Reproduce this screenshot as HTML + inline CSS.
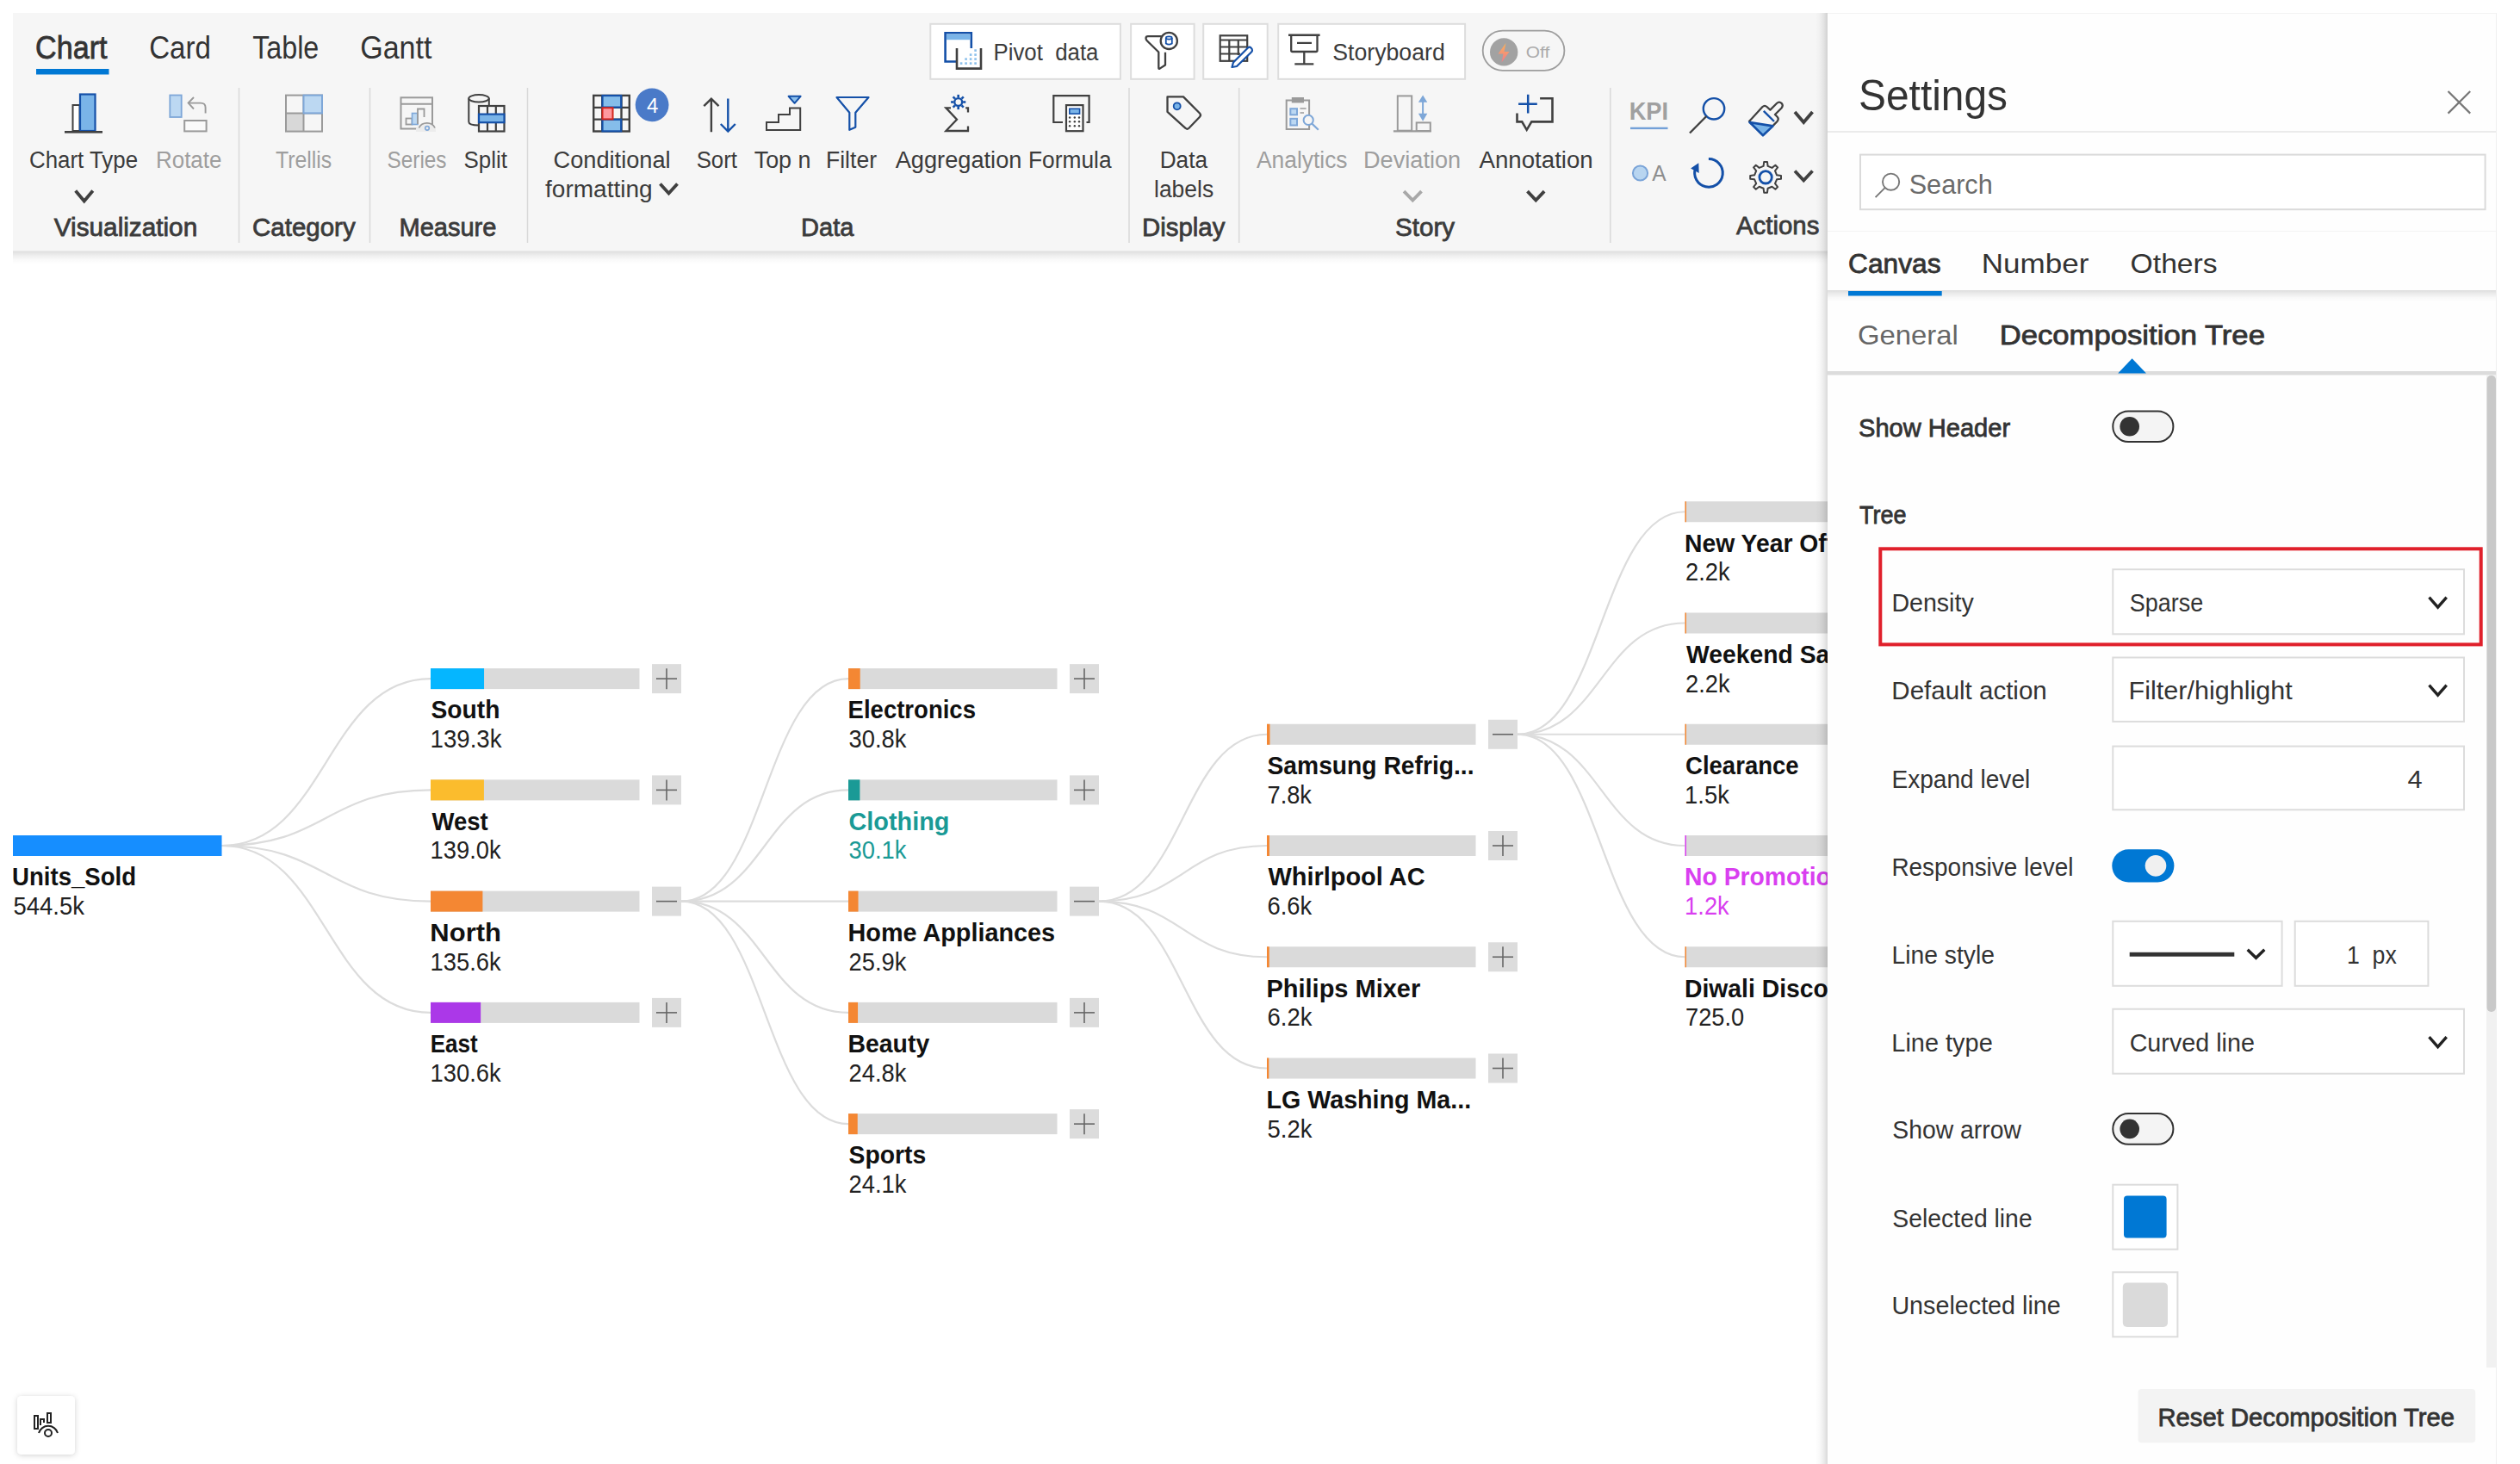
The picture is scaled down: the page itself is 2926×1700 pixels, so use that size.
<!DOCTYPE html>
<html><head><meta charset="utf-8"><style>
html,body{margin:0;padding:0;background:#fff;width:2926px;height:1700px;overflow:hidden}
svg{display:block;font-family:"Liberation Sans", sans-serif}
</style></head><body>
<svg width="2926" height="1700" viewBox="0 0 2926 1700">
<defs>
<filter id="shBtn" x="-50%" y="-50%" width="200%" height="200%"><feDropShadow dx="0" dy="1" stdDeviation="3" flood-color="#000" flood-opacity="0.18"/></filter>
<linearGradient id="gV" x1="0" y1="0" x2="0" y2="1"><stop offset="0" stop-color="#000" stop-opacity="0.13"/><stop offset="0.3" stop-color="#000" stop-opacity="0.075"/><stop offset="0.65" stop-color="#000" stop-opacity="0.025"/><stop offset="1" stop-color="#000" stop-opacity="0"/></linearGradient>
<linearGradient id="gH" x1="1" y1="0" x2="0" y2="0"><stop offset="0" stop-color="#000" stop-opacity="0.15"/><stop offset="0.3" stop-color="#000" stop-opacity="0.08"/><stop offset="0.65" stop-color="#000" stop-opacity="0.025"/><stop offset="1" stop-color="#000" stop-opacity="0"/></linearGradient>
<linearGradient id="bolt" x1="0" y1="0" x2="0" y2="1"><stop offset="0" stop-color="#f9b35a"/><stop offset="1" stop-color="#f27a8a"/></linearGradient>
</defs>
<path d="M257.5,982 C378.75,982 378.75,788.125 500,788.125" fill="none" stroke="#dcdcdc" stroke-width="2.2"/><path d="M257.5,982 C378.75,982 378.75,917.375 500,917.375" fill="none" stroke="#dcdcdc" stroke-width="2.2"/><path d="M257.5,982 C378.75,982 378.75,1046.625 500,1046.625" fill="none" stroke="#dcdcdc" stroke-width="2.2"/><path d="M257.5,982 C378.75,982 378.75,1175.875 500,1175.875" fill="none" stroke="#dcdcdc" stroke-width="2.2"/><path d="M791,1046.625 C888.0,1046.625 888.0,788.125 985,788.125" fill="none" stroke="#dcdcdc" stroke-width="2.2"/><path d="M791,1046.625 C888.0,1046.625 888.0,917.375 985,917.375" fill="none" stroke="#dcdcdc" stroke-width="2.2"/><path d="M791,1046.625 C888.0,1046.625 888.0,1046.625 985,1046.625" fill="none" stroke="#dcdcdc" stroke-width="2.2"/><path d="M791,1046.625 C888.0,1046.625 888.0,1175.875 985,1175.875" fill="none" stroke="#dcdcdc" stroke-width="2.2"/><path d="M791,1046.625 C888.0,1046.625 888.0,1305.125 985,1305.125" fill="none" stroke="#dcdcdc" stroke-width="2.2"/><path d="M1276,1046.625 C1373.5,1046.625 1373.5,852.75 1471,852.75" fill="none" stroke="#dcdcdc" stroke-width="2.2"/><path d="M1276,1046.625 C1373.5,1046.625 1373.5,982.0 1471,982.0" fill="none" stroke="#dcdcdc" stroke-width="2.2"/><path d="M1276,1046.625 C1373.5,1046.625 1373.5,1111.25 1471,1111.25" fill="none" stroke="#dcdcdc" stroke-width="2.2"/><path d="M1276,1046.625 C1373.5,1046.625 1373.5,1240.5 1471,1240.5" fill="none" stroke="#dcdcdc" stroke-width="2.2"/><path d="M1762,852.75 C1859.25,852.75 1859.25,594.25 1956.5,594.25" fill="none" stroke="#dcdcdc" stroke-width="2.2"/><path d="M1762,852.75 C1859.25,852.75 1859.25,723.5 1956.5,723.5" fill="none" stroke="#dcdcdc" stroke-width="2.2"/><path d="M1762,852.75 C1859.25,852.75 1859.25,852.75 1956.5,852.75" fill="none" stroke="#dcdcdc" stroke-width="2.2"/><path d="M1762,852.75 C1859.25,852.75 1859.25,982.0 1956.5,982.0" fill="none" stroke="#dcdcdc" stroke-width="2.2"/><path d="M1762,852.75 C1859.25,852.75 1859.25,1111.25 1956.5,1111.25" fill="none" stroke="#dcdcdc" stroke-width="2.2"/><rect x="15" y="970" width="242.5" height="24" fill="#168eff" /><text x="14.10" y="1028.30" font-size="29" font-weight="700" fill="#111" textLength="144.00" lengthAdjust="spacingAndGlyphs">Units_Sold</text><text x="15.55" y="1062.00" font-size="29" font-weight="400" fill="#222" textLength="82.32" lengthAdjust="spacingAndGlyphs">544.5k</text><rect x="500" y="776.125" width="242.5" height="24" fill="#dadada" /><rect x="500" y="776.125" width="62.03902662993573" height="24" fill="#05b6ff" /><text x="500.53" y="834.42" font-size="29" font-weight="700" fill="#111" textLength="79.90" lengthAdjust="spacingAndGlyphs">South</text><text x="499.60" y="868.12" font-size="29" font-weight="400" fill="#222" textLength="82.88" lengthAdjust="spacingAndGlyphs">139.3k</text><rect x="757" y="771.125" width="34" height="34" fill="#dcdcdc"/><path d="M762,788.125 H786" stroke="#666" stroke-width="1.6"/><path d="M774,776.125 V800.125" stroke="#666" stroke-width="1.6"/><rect x="500" y="905.375" width="242.5" height="24" fill="#dadada" /><rect x="500" y="905.375" width="61.90541781450872" height="24" fill="#fbbc2d" /><text x="501.50" y="963.67" font-size="29" font-weight="700" fill="#111" textLength="65.28" lengthAdjust="spacingAndGlyphs">West</text><text x="499.62" y="997.38" font-size="29" font-weight="400" fill="#222" textLength="81.98" lengthAdjust="spacingAndGlyphs">139.0k</text><rect x="757" y="900.375" width="34" height="34" fill="#dcdcdc"/><path d="M762,917.375 H786" stroke="#666" stroke-width="1.6"/><path d="M774,905.375 V929.375" stroke="#666" stroke-width="1.6"/><rect x="500" y="1034.625" width="242.5" height="24" fill="#dadada" /><rect x="500" y="1034.625" width="60.391184573002754" height="24" fill="#f48733" /><text x="499.36" y="1092.92" font-size="29" font-weight="700" fill="#111" textLength="82.55" lengthAdjust="spacingAndGlyphs">North</text><text x="499.62" y="1126.62" font-size="29" font-weight="400" fill="#222" textLength="81.98" lengthAdjust="spacingAndGlyphs">135.6k</text><rect x="757" y="1029.625" width="34" height="34" fill="#dcdcdc"/><path d="M762,1046.625 H786" stroke="#666" stroke-width="1.6"/><rect x="500" y="1163.875" width="242.5" height="24" fill="#dadada" /><rect x="500" y="1163.875" width="58.164370982552796" height="24" fill="#ab38e8" /><text x="499.70" y="1222.17" font-size="29" font-weight="700" fill="#111" textLength="55.04" lengthAdjust="spacingAndGlyphs">East</text><text x="499.62" y="1255.88" font-size="29" font-weight="400" fill="#222" textLength="81.98" lengthAdjust="spacingAndGlyphs">130.6k</text><rect x="757" y="1158.875" width="34" height="34" fill="#dcdcdc"/><path d="M762,1175.875 H786" stroke="#666" stroke-width="1.6"/><path d="M774,1163.875 V1187.875" stroke="#666" stroke-width="1.6"/><rect x="985" y="776.125" width="242.5" height="24" fill="#dadada" /><rect x="985" y="776.125" width="13.717171717171718" height="24" fill="#f48733" /><text x="984.60" y="834.42" font-size="29" font-weight="700" fill="#111" textLength="148.37" lengthAdjust="spacingAndGlyphs">Electronics</text><text x="985.56" y="868.12" font-size="29" font-weight="400" fill="#222" textLength="66.80" lengthAdjust="spacingAndGlyphs">30.8k</text><rect x="1242" y="771.125" width="34" height="34" fill="#dcdcdc"/><path d="M1247,788.125 H1271" stroke="#666" stroke-width="1.6"/><path d="M1259,776.125 V800.125" stroke="#666" stroke-width="1.6"/><rect x="985" y="905.375" width="242.5" height="24" fill="#dadada" /><rect x="985" y="905.375" width="13.405417814508725" height="24" fill="#1a9a96" /><text x="985.51" y="963.67" font-size="29" font-weight="700" fill="#1a9a96" textLength="116.96" lengthAdjust="spacingAndGlyphs">Clothing</text><text x="985.56" y="997.38" font-size="29" font-weight="400" fill="#1a9a96" textLength="66.80" lengthAdjust="spacingAndGlyphs">30.1k</text><rect x="1242" y="900.375" width="34" height="34" fill="#dcdcdc"/><path d="M1247,917.375 H1271" stroke="#666" stroke-width="1.6"/><path d="M1259,905.375 V929.375" stroke="#666" stroke-width="1.6"/><rect x="985" y="1034.625" width="242.5" height="24" fill="#dadada" /><rect x="985" y="1034.625" width="11.534894398530762" height="24" fill="#f48733" /><text x="984.51" y="1092.92" font-size="29" font-weight="700" fill="#111" textLength="240.66" lengthAdjust="spacingAndGlyphs">Home Appliances</text><text x="985.56" y="1126.62" font-size="29" font-weight="400" fill="#222" textLength="66.80" lengthAdjust="spacingAndGlyphs">25.9k</text><rect x="1242" y="1029.625" width="34" height="34" fill="#dcdcdc"/><path d="M1247,1046.625 H1271" stroke="#666" stroke-width="1.6"/><rect x="985" y="1163.875" width="242.5" height="24" fill="#dadada" /><rect x="985" y="1163.875" width="11.044995408631774" height="24" fill="#f48733" /><text x="984.54" y="1222.17" font-size="29" font-weight="700" fill="#111" textLength="94.67" lengthAdjust="spacingAndGlyphs">Beauty</text><text x="985.56" y="1255.88" font-size="29" font-weight="400" fill="#222" textLength="66.80" lengthAdjust="spacingAndGlyphs">24.8k</text><rect x="1242" y="1158.875" width="34" height="34" fill="#dcdcdc"/><path d="M1247,1175.875 H1271" stroke="#666" stroke-width="1.6"/><path d="M1259,1163.875 V1187.875" stroke="#666" stroke-width="1.6"/><rect x="985" y="1293.125" width="242.5" height="24" fill="#dadada" /><rect x="985" y="1293.125" width="10.73324150596878" height="24" fill="#f48733" /><text x="985.52" y="1351.42" font-size="29" font-weight="700" fill="#111" textLength="89.65" lengthAdjust="spacingAndGlyphs">Sports</text><text x="985.56" y="1385.12" font-size="29" font-weight="400" fill="#222" textLength="66.80" lengthAdjust="spacingAndGlyphs">24.1k</text><rect x="1242" y="1288.125" width="34" height="34" fill="#dcdcdc"/><path d="M1247,1305.125 H1271" stroke="#666" stroke-width="1.6"/><path d="M1259,1293.125 V1317.125" stroke="#666" stroke-width="1.6"/><rect x="1471" y="840.75" width="242.5" height="24" fill="#dadada" /><rect x="1471" y="840.75" width="3.4738292011019283" height="24" fill="#f48733" /><text x="1471.53" y="899.05" font-size="29" font-weight="700" fill="#111" textLength="239.98" lengthAdjust="spacingAndGlyphs">Samsung Refrig...</text><text x="1471.56" y="932.75" font-size="29" font-weight="400" fill="#222" textLength="51.38" lengthAdjust="spacingAndGlyphs">7.8k</text><rect x="1728" y="835.75" width="34" height="34" fill="#dcdcdc"/><path d="M1733,852.75 H1757" stroke="#666" stroke-width="1.6"/><rect x="1471" y="970.0" width="242.5" height="24" fill="#dadada" /><rect x="1471" y="970.0" width="2.9393939393939394" height="24" fill="#f48733" /><text x="1472.50" y="1028.30" font-size="29" font-weight="700" fill="#111" textLength="182.06" lengthAdjust="spacingAndGlyphs">Whirlpool AC</text><text x="1471.56" y="1062.00" font-size="29" font-weight="400" fill="#222" textLength="51.62" lengthAdjust="spacingAndGlyphs">6.6k</text><rect x="1728" y="965.0" width="34" height="34" fill="#dcdcdc"/><path d="M1733,982.0 H1757" stroke="#666" stroke-width="1.6"/><path d="M1745,970.0 V994.0" stroke="#666" stroke-width="1.6"/><rect x="1471" y="1099.25" width="242.5" height="24" fill="#dadada" /><rect x="1471" y="1099.25" width="2.7612488521579435" height="24" fill="#f48733" /><text x="1470.50" y="1157.55" font-size="29" font-weight="700" fill="#111" textLength="178.69" lengthAdjust="spacingAndGlyphs">Philips Mixer</text><text x="1471.55" y="1191.25" font-size="29" font-weight="400" fill="#222" textLength="51.88" lengthAdjust="spacingAndGlyphs">6.2k</text><rect x="1728" y="1094.25" width="34" height="34" fill="#dcdcdc"/><path d="M1733,1111.25 H1757" stroke="#666" stroke-width="1.6"/><path d="M1745,1099.25 V1123.25" stroke="#666" stroke-width="1.6"/><rect x="1471" y="1228.5" width="242.5" height="24" fill="#dadada" /><rect x="1471" y="1228.5" width="2.315886134067952" height="24" fill="#f48733" /><text x="1470.52" y="1286.80" font-size="29" font-weight="700" fill="#111" textLength="237.67" lengthAdjust="spacingAndGlyphs">LG Washing Ma...</text><text x="1471.55" y="1320.50" font-size="29" font-weight="400" fill="#222" textLength="51.88" lengthAdjust="spacingAndGlyphs">5.2k</text><rect x="1728" y="1223.5" width="34" height="34" fill="#dcdcdc"/><path d="M1733,1240.5 H1757" stroke="#666" stroke-width="1.6"/><path d="M1745,1228.5 V1252.5" stroke="#666" stroke-width="1.6"/><rect x="1956.5" y="582.25" width="242.5" height="24" fill="#dadada" /><rect x="1956.5" y="582.25" width="1.5" height="24" fill="#f48733" /><text x="1956.05" y="640.55" font-size="29" font-weight="700" fill="#111" textLength="200.89" lengthAdjust="spacingAndGlyphs">New Year Offer</text><text x="1957.06" y="674.25" font-size="29" font-weight="400" fill="#222" textLength="51.62" lengthAdjust="spacingAndGlyphs">2.2k</text><rect x="1956.5" y="711.5" width="242.5" height="24" fill="#dadada" /><rect x="1956.5" y="711.5" width="1.5" height="24" fill="#f48733" /><text x="1958.00" y="769.80" font-size="29" font-weight="700" fill="#111" textLength="189.88" lengthAdjust="spacingAndGlyphs">Weekend Sale</text><text x="1957.06" y="803.50" font-size="29" font-weight="400" fill="#222" textLength="51.62" lengthAdjust="spacingAndGlyphs">2.2k</text><rect x="1956.5" y="840.75" width="242.5" height="24" fill="#dadada" /><rect x="1956.5" y="840.75" width="1.5" height="24" fill="#f48733" /><text x="1957.05" y="899.05" font-size="29" font-weight="700" fill="#111" textLength="131.57" lengthAdjust="spacingAndGlyphs">Clearance</text><text x="1956.11" y="932.75" font-size="29" font-weight="400" fill="#222" textLength="51.72" lengthAdjust="spacingAndGlyphs">1.5k</text><rect x="1956.5" y="970.0" width="242.5" height="24" fill="#dadada" /><rect x="1956.5" y="970.0" width="1.5" height="24" fill="#d93ff0" /><text x="1956.05" y="1028.30" font-size="29" font-weight="700" fill="#d93ff0" textLength="187.13" lengthAdjust="spacingAndGlyphs">No Promotion</text><text x="1956.12" y="1062.00" font-size="29" font-weight="400" fill="#d93ff0" textLength="51.62" lengthAdjust="spacingAndGlyphs">1.2k</text><rect x="1956.5" y="1099.25" width="242.5" height="24" fill="#dadada" /><rect x="1956.5" y="1099.25" width="1.5" height="24" fill="#f48733" /><text x="1956.05" y="1157.55" font-size="29" font-weight="700" fill="#111" textLength="210.77" lengthAdjust="spacingAndGlyphs">Diwali Discount</text><text x="1957.06" y="1191.25" font-size="29" font-weight="400" fill="#222" textLength="68.08" lengthAdjust="spacingAndGlyphs">725.0</text><rect x="20" y="1621" width="67" height="68" rx="5" fill="#fff" filter="url(#shBtn)"/><g fill="none" stroke="#222" stroke-width="2"><rect x="40" y="1644" width="4" height="15"/><path d="M47,1655 V1648 H51 V1652"/><rect x="55" y="1641" width="4" height="11"/><path d="M45,1664 A11.5,11.5 0 0 1 67,1664"/><circle cx="56" cy="1664" r="4"/></g><rect x="15" y="15" width="2120" height="276.5" fill="#f6f6f6" /><rect x="15" y="291.5" width="2110" height="15" fill="url(#gV)" /><text x="41.08" y="67.50" font-size="37" font-weight="400" fill="#333" stroke="#333" stroke-width="0.8" textLength="83.45" lengthAdjust="spacingAndGlyphs">Chart</text><rect x="42" y="80" width="84.5" height="6.5" fill="#0078d4" /><text x="173.21" y="67.50" font-size="37" font-weight="400" fill="#333" textLength="71.76" lengthAdjust="spacingAndGlyphs">Card</text><text x="293.13" y="67.50" font-size="37" font-weight="400" fill="#333" textLength="77.14" lengthAdjust="spacingAndGlyphs">Table</text><text x="418.16" y="67.50" font-size="37" font-weight="400" fill="#333" textLength="83.30" lengthAdjust="spacingAndGlyphs">Gantt</text><rect x="276.75" y="102" width="1.5" height="180" fill="#d9d9d9" /><rect x="428.75" y="102" width="1.5" height="180" fill="#d9d9d9" /><rect x="611.75" y="102" width="1.5" height="180" fill="#d9d9d9" /><rect x="1310.25" y="102" width="1.5" height="180" fill="#d9d9d9" /><rect x="1437.95" y="102" width="1.5" height="180" fill="#d9d9d9" /><rect x="1869.05" y="102" width="1.5" height="180" fill="#d9d9d9" /><text x="33.94" y="195.40" font-size="27" font-weight="400" fill="#3b3b3b" textLength="126.11" lengthAdjust="spacingAndGlyphs">Chart Type</text><text x="180.98" y="195.40" font-size="27" font-weight="400" fill="#9e9e9e" textLength="76.46" lengthAdjust="spacingAndGlyphs">Rotate</text><text x="319.88" y="195.40" font-size="27" font-weight="400" fill="#9e9e9e" textLength="65.34" lengthAdjust="spacingAndGlyphs">Trellis</text><text x="449.60" y="195.40" font-size="27" font-weight="400" fill="#9e9e9e" textLength="68.88" lengthAdjust="spacingAndGlyphs">Series</text><text x="538.44" y="195.40" font-size="27" font-weight="400" fill="#3b3b3b" textLength="50.41" lengthAdjust="spacingAndGlyphs">Split</text><text x="642.59" y="195.00" font-size="27" font-weight="400" fill="#3b3b3b" textLength="136.01" lengthAdjust="spacingAndGlyphs">Conditional</text><text x="633.00" y="229.20" font-size="27" font-weight="400" fill="#3b3b3b" textLength="124.64" lengthAdjust="spacingAndGlyphs">formatting</text><text x="808.64" y="195.00" font-size="27" font-weight="400" fill="#3b3b3b" textLength="47.31" lengthAdjust="spacingAndGlyphs">Sort</text><text x="875.70" y="195.00" font-size="27" font-weight="400" fill="#3b3b3b" textLength="65.85" lengthAdjust="spacingAndGlyphs">Top n</text><text x="959.03" y="195.00" font-size="27" font-weight="400" fill="#3b3b3b" textLength="58.97" lengthAdjust="spacingAndGlyphs">Filter</text><text x="1039.70" y="195.00" font-size="27" font-weight="400" fill="#3b3b3b" textLength="146.74" lengthAdjust="spacingAndGlyphs">Aggregation</text><text x="1194.05" y="195.00" font-size="27" font-weight="400" fill="#3b3b3b" textLength="96.48" lengthAdjust="spacingAndGlyphs">Formula</text><text x="1346.66" y="195.00" font-size="27" font-weight="400" fill="#3b3b3b" textLength="55.39" lengthAdjust="spacingAndGlyphs">Data</text><text x="1340.04" y="229.20" font-size="27" font-weight="400" fill="#3b3b3b" textLength="69.09" lengthAdjust="spacingAndGlyphs">labels</text><text x="1459.00" y="195.00" font-size="27" font-weight="400" fill="#9e9e9e" textLength="105.52" lengthAdjust="spacingAndGlyphs">Analytics</text><text x="1582.99" y="195.00" font-size="27" font-weight="400" fill="#9e9e9e" textLength="113.18" lengthAdjust="spacingAndGlyphs">Deviation</text><text x="1717.50" y="195.00" font-size="27" font-weight="400" fill="#3b3b3b" textLength="132.26" lengthAdjust="spacingAndGlyphs">Annotation</text><text x="62.80" y="274.00" font-size="30" font-weight="400" fill="#3b3b3b" stroke="#3b3b3b" stroke-width="0.8" textLength="166.38" lengthAdjust="spacingAndGlyphs">Visualization</text><text x="293.02" y="274.00" font-size="30" font-weight="400" fill="#3b3b3b" stroke="#3b3b3b" stroke-width="0.8" textLength="119.62" lengthAdjust="spacingAndGlyphs">Category</text><text x="463.46" y="274.00" font-size="30" font-weight="400" fill="#3b3b3b" stroke="#3b3b3b" stroke-width="0.8" textLength="112.93" lengthAdjust="spacingAndGlyphs">Measure</text><text x="930.06" y="274.00" font-size="30" font-weight="400" fill="#3b3b3b" stroke="#3b3b3b" stroke-width="0.8" textLength="61.33" lengthAdjust="spacingAndGlyphs">Data</text><text x="1326.04" y="274.00" font-size="30" font-weight="400" fill="#3b3b3b" stroke="#3b3b3b" stroke-width="0.8" textLength="96.35" lengthAdjust="spacingAndGlyphs">Display</text><text x="1620.01" y="274.00" font-size="30" font-weight="400" fill="#3b3b3b" stroke="#3b3b3b" stroke-width="0.8" textLength="69.02" lengthAdjust="spacingAndGlyphs">Story</text><text x="2016.00" y="272.00" font-size="30" font-weight="400" fill="#3b3b3b" stroke="#3b3b3b" stroke-width="0.8" textLength="96.38" lengthAdjust="spacingAndGlyphs">Actions</text><path d="M87.7,221.5 L97.75,233.5 L107.8,221.5" fill="none" stroke="#404040" stroke-width="3.8" stroke-linecap="butt"/><path d="M766.5,213.5 L776.5,224.5 L786.5,213.5" fill="none" stroke="#404040" stroke-width="3.8" stroke-linecap="butt"/><path d="M1630.1,222.1 L1640.3,232.5 L1650.5,222.1" fill="none" stroke="#a8a8a8" stroke-width="3.8" stroke-linecap="butt"/><path d="M1773.5,222.1 L1783.3,232.5 L1793.1,222.1" fill="none" stroke="#404040" stroke-width="3.8" stroke-linecap="butt"/><path d="M2084.0,130.1 L2094.25,142.0 L2104.5,130.1" fill="none" stroke="#404040" stroke-width="3.8" stroke-linecap="butt"/><path d="M2084.0,198.5 L2094.25,209.5 L2104.5,198.5" fill="none" stroke="#404040" stroke-width="3.8" stroke-linecap="butt"/><rect x="84.5" y="122" width="8" height="30" fill="#fff" stroke="#404040" stroke-width="2"/><rect x="93" y="109.5" width="17.5" height="42.5" fill="#7ab4e8" stroke="#1450a8" stroke-width="2.2"/><rect x="75" y="152" width="44" height="2.6" fill="#404040"/><rect x="197.3" y="110.5" width="13.4" height="25.5" fill="#bcd8f2" stroke="#7ea7d8" stroke-width="1.8"/><rect x="214.2" y="140" width="25.4" height="12.4" fill="#fafafa" stroke="#9a9a9a" stroke-width="2"/><path d="M238.6,131.5 V125 Q238.6,119.6 233,119.6 H219" fill="none" stroke="#9a9a9a" stroke-width="1.9"/><path d="M225,113 L218.6,119.6 L225,126.5" fill="none" stroke="#9a9a9a" stroke-width="1.9"/><rect x="332" y="131.4" width="20.5" height="21" fill="#d8d8d8"/><rect x="332" y="110.6" width="42" height="42" fill="#fcfcfc" fill-opacity="0" stroke="#9a9a9a" stroke-width="2"/><path d="M332,131.4 H374 M352.5,110.6 V152.6" stroke="#9a9a9a" stroke-width="2"/><rect x="352.5" y="110.6" width="21.5" height="20.8" fill="#bcd8f2" stroke="#7ea7d8" stroke-width="2"/><rect x="465.5" y="113.3" width="36.5" height="36.2" fill="none" stroke="#9a9a9a" stroke-width="2"/><path d="M465.5,120.8 H502" stroke="#9a9a9a" stroke-width="2"/><rect x="471.5" y="137.5" width="7" height="7" fill="none" stroke="#9a9a9a" stroke-width="1.8"/><rect x="478.5" y="131.5" width="6.5" height="13" fill="#bcd8f2" stroke="#7ea7d8" stroke-width="1.6"/><path d="M485,144 V126.5 H492.5 V136" fill="none" stroke="#9a9a9a" stroke-width="1.8"/><path d="M483,153 V149 A14,14 0 0 1 506,149 V153 Z" fill="#ececec"/><path d="M486.5,148.5 A10,9 0 0 1 505,148.5" fill="none" stroke="#9a9a9a" stroke-width="1.8"/><circle cx="496" cy="148.8" r="2.3" fill="none" stroke="#7ea7d8" stroke-width="1.6"/><path d="M544.3,114.5 V141.5 Q544.3,145.5 556,145.5" fill="none" stroke="#404040" stroke-width="2"/><ellipse cx="556" cy="114.3" rx="11.8" ry="4.2" fill="none" stroke="#404040" stroke-width="2"/><path d="M567.8,114.3 V123" stroke="#404040" stroke-width="2"/><rect x="556" y="123" width="29.5" height="29.5" fill="#f6f6f6" stroke="#404040" stroke-width="2.2"/><path d="M566,123 V152.5 M575.8,123 V152.5" stroke="#404040" stroke-width="2.2"/><rect x="556" y="132.6" width="29.5" height="9.6" fill="#7ab4e8" stroke="#1450a8" stroke-width="2.2"/><rect x="689.2" y="110.9" width="41.6" height="41.6" fill="none" stroke="#404040" stroke-width="2.4"/><path d="M689,124.9 H731 M689,138.6 H731 M699.2,110.7 V152.7 M721.5,110.7 V152.7" stroke="#404040" stroke-width="2.4"/><rect x="699.5" y="111" width="21.7" height="13.6" fill="#85bdea" stroke="#1450a8" stroke-width="2.2"/><rect x="699.5" y="138.8" width="21.7" height="13.6" fill="#85bdea" stroke="#1450a8" stroke-width="2.2"/><rect x="699.5" y="125.2" width="12" height="13.2" fill="#ff99a0" stroke="#d4261e" stroke-width="2"/><circle cx="757.1" cy="121.8" r="19.4" fill="#4a7ac8"/><text x="751.00" y="130.50" font-size="23" font-weight="400" fill="#fff" textLength="13.33" lengthAdjust="spacingAndGlyphs">4</text><path d="M825.9,114.5 V153.3 M817.3,123.2 L825.9,114.6 L834.5,123.2" fill="none" stroke="#404040" stroke-width="2.4"/><path d="M845.3,114.6 V152.5 M836.8,144 L845.3,152.5 L853.8,144" fill="none" stroke="#1450a8" stroke-width="2.4"/><path d="M890,151 V142 H904 V133 H917 V125.6 H929.2 V151 Z" fill="none" stroke="#404040" stroke-width="2"/><path d="M915.6,111.8 H929.6 L922.6,119.8 Z" fill="#8cc0ec" stroke="#1450a8" stroke-width="2" stroke-linejoin="round"/><path d="M971.5,113 H1008.5 L993.3,130.8 V147.8 L986.3,150.8 V130.8 Z" fill="none" stroke="#1450a8" stroke-width="2.2" stroke-linejoin="round"/><path d="M1104,125.3 H1098.4 L1111,138.7 L1098.4,152 H1124 V146.4 M1121.2,125.3 H1124 V130.5" fill="none" stroke="#404040" stroke-width="2.3"/><circle cx="1112.7" cy="118.5" r="4.4" fill="none" stroke="#1450a8" stroke-width="2.3"/><rect x="-1.3" y="-8.6" width="2.6" height="3.2" fill="#1450a8" transform="translate(1112.7,118.5) rotate(0)"/><rect x="-1.3" y="-8.6" width="2.6" height="3.2" fill="#1450a8" transform="translate(1112.7,118.5) rotate(45)"/><rect x="-1.3" y="-8.6" width="2.6" height="3.2" fill="#1450a8" transform="translate(1112.7,118.5) rotate(90)"/><rect x="-1.3" y="-8.6" width="2.6" height="3.2" fill="#1450a8" transform="translate(1112.7,118.5) rotate(135)"/><rect x="-1.3" y="-8.6" width="2.6" height="3.2" fill="#1450a8" transform="translate(1112.7,118.5) rotate(180)"/><rect x="-1.3" y="-8.6" width="2.6" height="3.2" fill="#1450a8" transform="translate(1112.7,118.5) rotate(225)"/><rect x="-1.3" y="-8.6" width="2.6" height="3.2" fill="#1450a8" transform="translate(1112.7,118.5) rotate(270)"/><rect x="-1.3" y="-8.6" width="2.6" height="3.2" fill="#1450a8" transform="translate(1112.7,118.5) rotate(315)"/><path d="M1234,142 H1223.3 V111.2 H1264.6 V142 H1261.5" fill="none" stroke="#404040" stroke-width="2.2"/><rect x="1238" y="122.1" width="19.5" height="30.1" fill="#fff" stroke="#404040" stroke-width="2.2"/><rect x="1241.8" y="126.3" width="11.8" height="5.8" fill="#7ab4e8" stroke="#1450a8" stroke-width="1.6"/><circle cx="1242.1" cy="136.5" r="1.2" fill="#404040"/><circle cx="1247.8" cy="136.5" r="1.2" fill="#404040"/><circle cx="1253" cy="136.5" r="1.2" fill="#404040"/><circle cx="1242.1" cy="141.2" r="1.2" fill="#404040"/><circle cx="1247.8" cy="141.2" r="1.2" fill="#404040"/><circle cx="1253" cy="141.2" r="1.2" fill="#404040"/><circle cx="1242.1" cy="146.2" r="1.2" fill="#404040"/><circle cx="1247.8" cy="146.2" r="1.2" fill="#404040"/><circle cx="1253" cy="146.2" r="1.2" fill="#404040"/><path d="M1355.5,112.4 H1374 L1393,131.5 Q1395,133.6 1393,135.7 L1380.5,148.8 Q1378.5,150.8 1376.5,148.8 L1355.5,129.8 Z" fill="none" stroke="#404040" stroke-width="2.3" stroke-linejoin="round"/><circle cx="1366.7" cy="123.3" r="4" fill="#7ab4e8" stroke="#1450a8" stroke-width="1.8"/><rect x="1493.7" y="116.5" width="26.4" height="33.5" fill="none" stroke="#9a9a9a" stroke-width="2"/><rect x="1499.8" y="113" width="14.2" height="6.4" fill="#9a9a9a"/><rect x="1498.3" y="126.2" width="7.7" height="7.1" fill="#bcd8f2" stroke="#7ea7d8" stroke-width="2"/><rect x="1498.3" y="137.8" width="7.7" height="7.7" fill="#bcd8f2" stroke="#7ea7d8" stroke-width="2"/><path d="M1509.5,126 H1516.6 M1509.5,131 H1514" stroke="#9a9a9a" stroke-width="1.6"/><circle cx="1519.2" cy="139.4" r="5.6" fill="#f6f6f6" stroke="#7ea7d8" stroke-width="2"/><path d="M1523.3,143.5 L1530.8,150.8" stroke="#7ea7d8" stroke-width="2.2"/><rect x="1622.8" y="111.4" width="16.4" height="40.3" fill="none" stroke="#9a9a9a" stroke-width="2"/><path d="M1617.9,152.3 H1661.8" stroke="#9a9a9a" stroke-width="2.2"/><rect x="1644.7" y="142.4" width="16.1" height="9.6" fill="none" stroke="#9a9a9a" stroke-width="2"/><path d="M1652.1,117 V133" stroke="#7ea7d8" stroke-width="2"/><path d="M1646.9,118.8 L1652.1,110.4 L1657.3,118.8 Z M1646.9,131.7 L1652.1,140.7 L1657.3,131.7 Z" fill="#7ea7d8"/><path d="M1774.2,109.8 V131.6 M1763.1,120.7 H1784.8" stroke="#1450a8" stroke-width="2.5"/><path d="M1788.1,114.3 H1802.5 V141.4 H1778.3 L1772.7,150.8 L1767.2,141.4 H1761.5 V131.4" fill="none" stroke="#404040" stroke-width="2.6" stroke-linejoin="miter"/><text x="1891.68" y="139.10" font-size="30" font-weight="700" fill="#a0a0a0" textLength="45.45" lengthAdjust="spacingAndGlyphs">KPI</text><rect x="1893" y="147.7" width="43.5" height="2.4" fill="#73a0d8" /><circle cx="1990" cy="126.3" r="12.2" fill="none" stroke="#1450a8" stroke-width="2.4"/><path d="M1981.3,135 L1962,154.5" stroke="#404040" stroke-width="2.4"/><path d="M2059,145.6 L2063.5,141 Q2066,138 2063.5,135.5 L2061,133 L2068.5,125.5 Q2071,122.5 2068.5,119.8 Q2065.8,117.3 2063,120 L2055.4,127.6 L2051.5,124 Q2049,121.7 2046.5,124 L2030.5,141.5" fill="none" stroke="#404040" stroke-width="2.3" stroke-linejoin="round"/><path d="M2047.8,128.8 L2060,141" stroke="#1450a8" stroke-width="2.4"/><path d="M2031.5,142 L2058.6,146.4 L2047,157.3 Z" fill="#7ab4e8" stroke="#1450a8" stroke-width="2.6" stroke-linejoin="round"/><circle cx="1904.5" cy="201" r="8.6" fill="#b8d5f0" stroke="#7aa4d8" stroke-width="2"/><text x="1918.30" y="210.00" font-size="26" font-weight="400" fill="#8e8e8e" textLength="16.32" lengthAdjust="spacingAndGlyphs">A</text><path d="M1983.9,184.6 A16.3,16.3 0 1 1 1968.6,195.5" fill="none" stroke="#1450a8" stroke-width="3"/><path d="M1963.1,195.5 L1972.3,189.3 L1972.7,201 Z" fill="#1450a8"/><polygon points="2063.06,203.31 2068.00,203.91 2068.00,207.69 2063.06,208.29 2061.03,213.20 2064.09,217.12 2061.42,219.79 2057.50,216.73 2052.59,218.76 2051.99,223.70 2048.21,223.70 2047.61,218.76 2042.70,216.73 2038.78,219.79 2036.11,217.12 2039.17,213.20 2037.14,208.29 2032.20,207.69 2032.20,203.91 2037.14,203.31 2039.17,198.40 2036.11,194.48 2038.78,191.81 2042.70,194.87 2047.61,192.84 2048.21,187.90 2051.99,187.90 2052.59,192.84 2057.50,194.87 2061.42,191.81 2064.09,194.48 2061.03,198.40" fill="none" stroke="#404040" stroke-width="2" stroke-linejoin="round"/><circle cx="2050.1" cy="205.8" r="7.2" fill="none" stroke="#1450a8" stroke-width="2.8"/><rect x="1080.3" y="27.8" width="220.60000000000014" height="64" fill="#fff" stroke="#dddddd" stroke-width="2"/><rect x="1313.1" y="27.8" width="73.5" height="64" fill="#fff" stroke="#dddddd" stroke-width="2"/><rect x="1397.2" y="27.8" width="74.5" height="64" fill="#fff" stroke="#dddddd" stroke-width="2"/><rect x="1484.2" y="27.8" width="216.89999999999986" height="64" fill="#fff" stroke="#dddddd" stroke-width="2"/><text x="1153.49" y="69.60" font-size="27" font-weight="400" fill="#3b3b3b" textLength="121.91" lengthAdjust="spacingAndGlyphs">Pivot  data</text><text x="1547.21" y="69.70" font-size="27" font-weight="400" fill="#3b3b3b" textLength="130.54" lengthAdjust="spacingAndGlyphs">Storyboard</text><path d="M1110,71.5 H1097.6 V38.3 H1127.8 V56" fill="none" stroke="#1450a8" stroke-width="2.6"/><rect x="1098.9" y="39.6" width="27.6" height="6.6" fill="#7ab4e8"/><path d="M1111,56 V79.6 H1139 V56" fill="none" stroke="#404040" stroke-width="2.6"/><rect x="1131.3" y="57.3" width="2.6" height="2.6" fill="#8cc0ec"/><rect x="1125.8" y="62.3" width="2.6" height="2.6" fill="#8cc0ec"/><rect x="1131.3" y="62.3" width="2.6" height="2.6" fill="#8cc0ec"/><rect x="1120.3" y="67.3" width="2.6" height="2.6" fill="#8cc0ec"/><rect x="1125.8" y="67.3" width="2.6" height="2.6" fill="#8cc0ec"/><rect x="1131.3" y="67.3" width="2.6" height="2.6" fill="#8cc0ec"/><rect x="1114.8" y="72.3" width="2.6" height="2.6" fill="#8cc0ec"/><rect x="1120.3" y="72.3" width="2.6" height="2.6" fill="#8cc0ec"/><rect x="1125.8" y="72.3" width="2.6" height="2.6" fill="#8cc0ec"/><rect x="1131.3" y="72.3" width="2.6" height="2.6" fill="#8cc0ec"/><path d="M1350.5,42.2 H1333 Q1330.5,42.2 1330.5,44.5 Q1330.5,46 1332,47.5 L1345.3,60.5 V78.8 Q1345.3,80.2 1346.6,79.6 L1353,75.5 V60.8" fill="none" stroke="#404040" stroke-width="2.3" stroke-linejoin="round"/><circle cx="1357.3" cy="47.4" r="9.6" fill="#fff" stroke="#404040" stroke-width="2.3"/><path d="M1353.8,44 V50.5 Q1357.3,52.8 1360.8,50.5 V44" fill="none" stroke="#1450a8" stroke-width="1.8"/><ellipse cx="1357.3" cy="44" rx="3.5" ry="1.6" fill="none" stroke="#1450a8" stroke-width="1.6"/><rect x="1416.7" y="41.3" width="31.5" height="29.5" fill="none" stroke="#404040" stroke-width="2.2"/><path d="M1416.7,46.5 H1448.2 M1416.7,54.5 H1448.2 M1416.7,62.5 H1440 M1427.3,46.5 V70.8 M1437.8,46.5 V64" stroke="#404040" stroke-width="2.2"/><path d="M1452.5,55.5 Q1455.5,58.5 1452.5,61 L1436,77 L1430.5,78 L1432,72.5 L1448.5,56 Q1450.5,53.5 1452.5,55.5 Z" fill="#fff" stroke="#1450a8" stroke-width="2.2" stroke-linejoin="round"/><path d="M1496,40.8 H1532.6" stroke="#404040" stroke-width="2.4"/><path d="M1499.2,40.8 V58.5 Q1499.2,60 1500.7,60 H1528 Q1529.5,60 1529.5,58.5 V40.8" fill="none" stroke="#404040" stroke-width="2.3"/><path d="M1506,49.9 H1523" stroke="#404040" stroke-width="2.2"/><path d="M1514.3,60 V74.4 M1503.3,74.4 H1525.3" stroke="#404040" stroke-width="2.3"/><rect x="1721.7" y="35.7" width="94.7" height="46.1" rx="23" fill="none" stroke="#9d9d9d" stroke-width="1.8"/><circle cx="1746.2" cy="60.4" r="16.2" fill="#a2a2a2"/><path d="M1748.5,50 L1739.5,62.5 H1745.5 L1743.5,72.5 L1752.5,60 H1746.5 Z" fill="url(#bolt)"/><text x="1771.84" y="66.50" font-size="18" font-weight="400" fill="#ababab" textLength="27.50" lengthAdjust="spacingAndGlyphs">Off</text><rect x="2108" y="15" width="14" height="1685" fill="url(#gH)" /><rect x="2122" y="15" width="776" height="1700" fill="#fefefe"/><rect x="2122" y="15" width="776" height="1" fill="#f3f3f3" /><path d="M2898.5,15 V1700" stroke="#f0f0f0" stroke-width="1"/><text x="2158.09" y="127.80" font-size="50" font-weight="400" fill="#333" textLength="172.91" lengthAdjust="spacingAndGlyphs">Settings</text><path d="M2842.5,106 L2868.2,131.6 M2868.2,106 L2842.5,131.6" stroke="#777" stroke-width="2.2"/><rect x="2122" y="152" width="776" height="2" fill="#ebebeb" /><rect x="2160" y="179.6" width="725.6" height="63.6" fill="#fff" stroke="#dadada" stroke-width="2"/><circle cx="2195.6" cy="211.2" r="9.6" fill="none" stroke="#777" stroke-width="1.9"/><path d="M2188.6,218.2 L2177.6,229.2" stroke="#777" stroke-width="1.9"/><text x="2216.69" y="224.50" font-size="32" font-weight="400" fill="#6b6b6b" textLength="97.00" lengthAdjust="spacingAndGlyphs">Search</text><rect x="2122" y="268" width="776" height="1" fill="#f4f4f4" /><rect x="2122" y="337" width="776" height="13" fill="url(#gV)" /><text x="2146.01" y="317.00" font-size="32" font-weight="400" fill="#333" stroke="#333" stroke-width="0.8" textLength="107.49" lengthAdjust="spacingAndGlyphs">Canvas</text><rect x="2146" y="338" width="108.7" height="5.5" fill="#0078d4" /><text x="2300.72" y="317.00" font-size="32" font-weight="400" fill="#333" textLength="124.58" lengthAdjust="spacingAndGlyphs">Number</text><text x="2473.55" y="317.00" font-size="32" font-weight="400" fill="#333" textLength="101.14" lengthAdjust="spacingAndGlyphs">Others</text><text x="2156.95" y="400.00" font-size="32" font-weight="400" fill="#666" textLength="116.95" lengthAdjust="spacingAndGlyphs">General</text><text x="2321.73" y="400.00" font-size="32" font-weight="400" fill="#333" stroke="#333" stroke-width="0.8" textLength="308.19" lengthAdjust="spacingAndGlyphs">Decomposition Tree</text><rect x="2122" y="431" width="776" height="4.5" fill="#dcdcdc" /><path d="M2459.2,433.5 L2475.6,416.3 L2492,433.5 Z" fill="#0078d4"/><rect x="2887" y="436" width="11" height="1152" fill="#f1f1f1" /><rect x="2887.5" y="436" width="10.5" height="739" rx="5" fill="#c9c9c9"/><text x="2158.03" y="506.90" font-size="30" font-weight="400" fill="#333" stroke="#333" stroke-width="0.8" textLength="176.06" lengthAdjust="spacingAndGlyphs">Show Header</text><rect x="2453.3" y="477.4" width="70.1" height="35.60000000000002" rx="17.80000000000001" fill="#f4f4f4" stroke="#333" stroke-width="2"/><circle cx="2472.7" cy="495.2" r="11.3" fill="#333"/><text x="2159.00" y="607.80" font-size="30" font-weight="400" fill="#333" stroke="#333" stroke-width="0.8" textLength="54.52" lengthAdjust="spacingAndGlyphs">Tree</text><rect x="2183.3" y="637.3" width="697.4" height="111.1" fill="none" stroke="#e0202b" stroke-width="4"/><text x="2196.39" y="710.00" font-size="30" font-weight="400" fill="#333" textLength="95.35" lengthAdjust="spacingAndGlyphs">Density</text><rect x="2453.3" y="661.2" width="407.6999999999998" height="75.09999999999991" fill="#fff" stroke="#dcdcdc" stroke-width="2"/><text x="2472.70" y="710.00" font-size="30" font-weight="400" fill="#333" textLength="85.45" lengthAdjust="spacingAndGlyphs">Sparse</text><path d="M2820.5,693.7 L2830.6000000000004,705.0999999999999 L2840.7000000000003,693.7" fill="none" stroke="#222" stroke-width="3.4"/><text x="2196.33" y="811.70" font-size="30" font-weight="400" fill="#333" textLength="180.40" lengthAdjust="spacingAndGlyphs">Default action</text><rect x="2453.3" y="763.5" width="407.6999999999998" height="74.39999999999998" fill="#fff" stroke="#dcdcdc" stroke-width="2"/><text x="2471.56" y="811.70" font-size="30" font-weight="400" fill="#333" textLength="190.30" lengthAdjust="spacingAndGlyphs">Filter/highlight</text><path d="M2820.5,795.7 L2830.6000000000004,807.0999999999999 L2840.7000000000003,795.7" fill="none" stroke="#222" stroke-width="3.4"/><text x="2196.43" y="915.00" font-size="30" font-weight="400" fill="#333" textLength="160.86" lengthAdjust="spacingAndGlyphs">Expand level</text><rect x="2453.3" y="866.6" width="407.6999999999998" height="73.69999999999993" fill="#fff" stroke="#dcdcdc" stroke-width="2"/><text x="2795.47" y="915.00" font-size="30" font-weight="400" fill="#333" textLength="17.13" lengthAdjust="spacingAndGlyphs">4</text><text x="2196.44" y="1017.30" font-size="30" font-weight="400" fill="#333" textLength="211.03" lengthAdjust="spacingAndGlyphs">Responsive level</text><rect x="2452.3" y="986.2" width="72.1" height="38.299999999999955" rx="19.149999999999977" fill="#0078d4"/><circle cx="2503" cy="1005.35" r="12.3" fill="#f0f0f0"/><text x="2196.41" y="1119.00" font-size="30" font-weight="400" fill="#333" textLength="119.59" lengthAdjust="spacingAndGlyphs">Line style</text><rect x="2453.3" y="1069.8" width="196.29999999999973" height="75.0" fill="#fff" stroke="#dcdcdc" stroke-width="2"/><rect x="2472.7" y="1105.8" width="121.6" height="4.9" fill="#333" /><path d="M2609.7,1102.7 L2619.5,1112.3 L2629.3,1102.7" fill="none" stroke="#222" stroke-width="3.4"/><rect x="2664.7" y="1069.8" width="154.70000000000027" height="75.0" fill="#fff" stroke="#dcdcdc" stroke-width="2"/><text x="2724.92" y="1119.00" font-size="30" font-weight="400" fill="#333" textLength="57.82" lengthAdjust="spacingAndGlyphs">1  px</text><text x="2196.37" y="1220.50" font-size="30" font-weight="400" fill="#333" textLength="117.37" lengthAdjust="spacingAndGlyphs">Line type</text><rect x="2453.3" y="1171.7" width="407.6999999999998" height="75.0" fill="#fff" stroke="#dcdcdc" stroke-width="2"/><text x="2472.64" y="1220.50" font-size="30" font-weight="400" fill="#333" textLength="145.28" lengthAdjust="spacingAndGlyphs">Curved line</text><path d="M2820.5,1204.2 L2830.6000000000004,1215.6 L2840.7000000000003,1204.2" fill="none" stroke="#222" stroke-width="3.4"/><text x="2197.36" y="1322.30" font-size="30" font-weight="400" fill="#333" textLength="149.58" lengthAdjust="spacingAndGlyphs">Show arrow</text><rect x="2453.3" y="1293" width="70.1" height="35.799999999999955" rx="17.899999999999977" fill="#f4f4f4" stroke="#333" stroke-width="2"/><circle cx="2472.7" cy="1310.9" r="11.3" fill="#333"/><text x="2197.36" y="1424.50" font-size="30" font-weight="400" fill="#333" textLength="162.30" lengthAdjust="spacingAndGlyphs">Selected line</text><rect x="2453.3" y="1375.7" width="75.09999999999991" height="75.0" fill="#fff" stroke="#dcdcdc" stroke-width="2"/><rect x="2466" y="1388.5" width="49.6" height="49.1" rx="4" fill="#0078d4"/><text x="2196.39" y="1526.00" font-size="30" font-weight="400" fill="#333" textLength="196.39" lengthAdjust="spacingAndGlyphs">Unselected line</text><rect x="2453.3" y="1477.3" width="75.09999999999991" height="75.0" fill="#fff" stroke="#dcdcdc" stroke-width="2"/><rect x="2464.8" y="1489.4" width="52.2" height="51.5" rx="5" fill="#dadada"/><rect x="2482.5" y="1613" width="391.7" height="62.3" rx="4" fill="#f3f3f3"/><text x="2505.45" y="1656.00" font-size="30" font-weight="400" fill="#333" stroke="#333" stroke-width="0.8" textLength="344.64" lengthAdjust="spacingAndGlyphs">Reset Decomposition Tree</text>
</svg></body></html>
